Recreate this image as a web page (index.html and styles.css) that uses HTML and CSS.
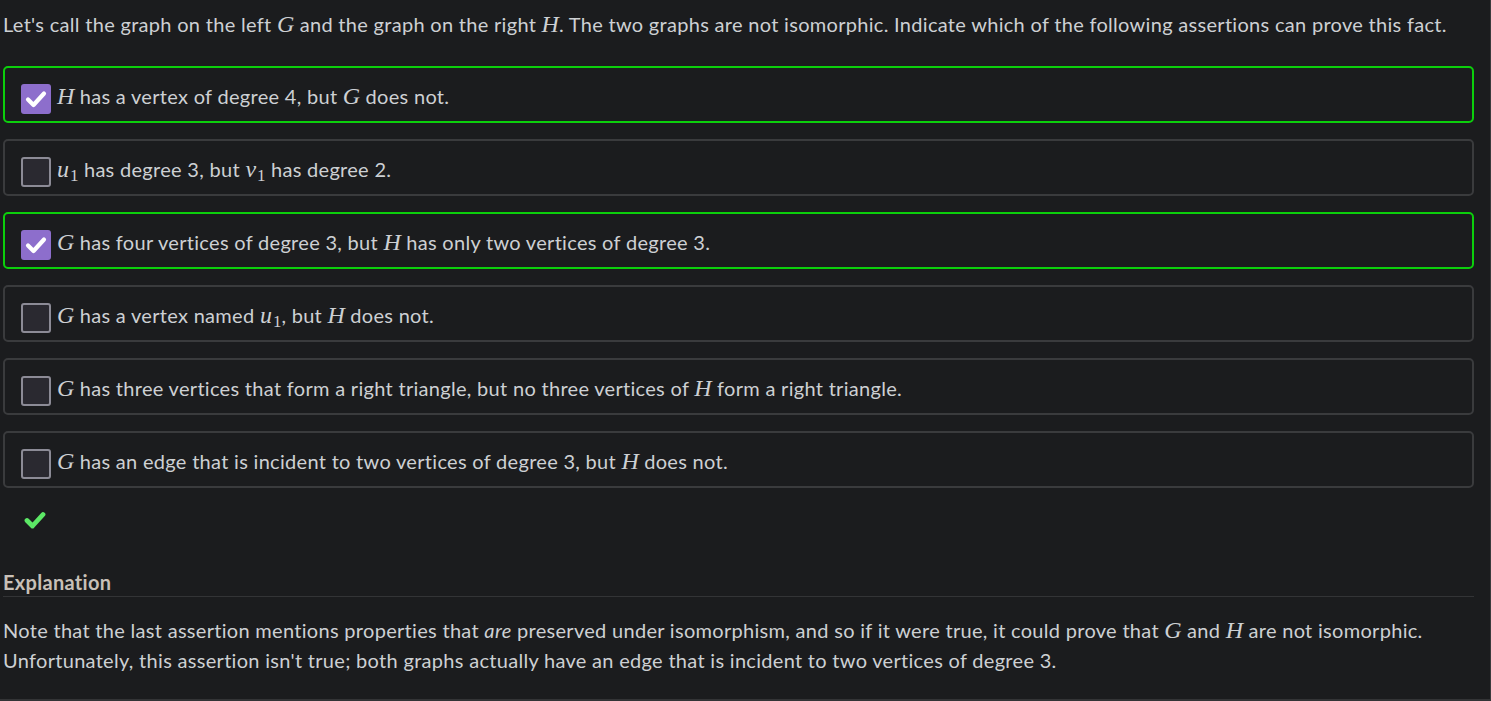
FILE: index.html
```html
<!DOCTYPE html>
<html>
<head>
<meta charset="utf-8">
<link rel="stylesheet" href="styles.css">
</head>
<body>
<div class="frame">
  <p class="prompt">Let's call the graph on the left <span class="m">G</span> and the graph on the right <span class="m">H</span>. The two graphs are not isomorphic. Indicate which of the following assertions can prove this fact.</p>
  <div class="options">
    <div class="opt sel">
      <span class="box on"><svg viewBox="0 0 30 30" width="30" height="30"><path d="M7 15.5 L12.5 21 L23 9.5" fill="none" stroke="#fff" stroke-width="4.2" stroke-linecap="round" stroke-linejoin="round"/></svg></span>
      <span class="txt"><span class="m">H</span> has a vertex of degree 4, but <span class="m">G</span> does not.</span>
    </div>
    <div class="opt">
      <span class="box"></span>
      <span class="txt"><span class="m">u</span><span class="sub">1</span> has degree 3, but <span class="m">v</span><span class="sub">1</span> has degree 2.</span>
    </div>
    <div class="opt sel">
      <span class="box on"><svg viewBox="0 0 30 30" width="30" height="30"><path d="M7 15.5 L12.5 21 L23 9.5" fill="none" stroke="#fff" stroke-width="4.2" stroke-linecap="round" stroke-linejoin="round"/></svg></span>
      <span class="txt"><span class="m">G</span> has four vertices of degree 3, but <span class="m">H</span> has only two vertices of degree 3.</span>
    </div>
    <div class="opt">
      <span class="box"></span>
      <span class="txt"><span class="m">G</span> has a vertex named <span class="m">u</span><span class="sub">1</span>, but <span class="m">H</span> does not.</span>
    </div>
    <div class="opt">
      <span class="box"></span>
      <span class="txt"><span class="m">G</span> has three vertices that form a right triangle, but no three vertices of <span class="m">H</span> form a right triangle.</span>
    </div>
    <div class="opt">
      <span class="box"></span>
      <span class="txt"><span class="m">G</span> has an edge that is incident to two vertices of degree 3, but <span class="m">H</span> does not.</span>
    </div>
  </div>
  <div class="result"><svg viewBox="0 0 22 18" width="22" height="18"><path d="M3 9.5 L8.5 15 L19 3.5" fill="none" stroke="#5ce866" stroke-width="4.8" stroke-linejoin="round" stroke-linecap="round"/></svg></div>
  <h3 class="exp-title">Explanation</h3>
  <p class="exp">Note that the last assertion mentions properties that <em>are</em> preserved under isomorphism, and so if it were true, it could prove that <span class="m">G</span> and <span class="m">H</span> are not isomorphic.<br>Unfortunately, this assertion isn't true; both graphs actually have an edge that is incident to two vertices of degree 3.</p>
</div>
</body>
</html>
```

FILE: styles.css
```css
html, body {
  margin: 0;
  padding: 0;
  background: #1b1c1e;
}
body {
  font-family: Lato, "Open Sans", sans-serif;
  font-size: 20px;
  letter-spacing: 0.3px;
  color: #cdd0d3;
}
.frame {
  box-sizing: border-box;
  height: 701px;
  padding: 0 16px 0 3px;
  border-right: 1px solid #3a3b3d;
  border-bottom: 2px solid #333436;
  overflow: hidden;
}
.prompt {
  margin: 0;
  padding-top: 9px;
  line-height: 30px;
}
.m {
  font-family: "Liberation Serif", "DejaVu Serif", serif;
  font-style: italic;
  font-size: 1.2em;
  line-height: 1;
  letter-spacing: 0;
}
.sub {
  font-family: "Liberation Serif", "DejaVu Serif", serif;
  font-size: 0.85em;
  position: relative;
  top: 0.25em;
  line-height: 1;
  margin-left: 1px;
  letter-spacing: 0;
}
.options {
  display: flex;
  flex-direction: column;
  gap: 16px;
  margin-top: 27px;
}
.opt {
  box-sizing: border-box;
  height: 57px;
  border: 2px solid #3a3b3d;
  border-radius: 5px;
  padding: 16px 16px 7px;
  display: flex;
  align-items: flex-start;
  gap: 6px;
}
.opt.sel {
  border-color: #0ccf0c;
}
.box {
  box-sizing: border-box;
  flex: none;
  width: 30px;
  height: 30px;
  border: 2px solid #8c8b96;
  background: #2a2930;
  border-radius: 3px;
  display: block;
}
.box.on {
  border: none;
  background: #8d6ecc;
}
.box svg {
  display: block;
}
.txt {
  line-height: 24px;
  white-space: nowrap;
}
.result {
  margin-top: 23px;
  padding-left: 21px;
  height: 18px;
}
.result svg {
  display: block;
}
.exp-title {
  margin: 41px 0 0;
  font-size: 20px;
  font-weight: 700;
  color: #c8c0b8;
  line-height: 24px;
  padding-bottom: 2px;
  border-bottom: 1px solid #333436;
}
.exp {
  margin: 18px 0 0;
  line-height: 30px;
}
.exp em {
  font-style: italic;
}
```
